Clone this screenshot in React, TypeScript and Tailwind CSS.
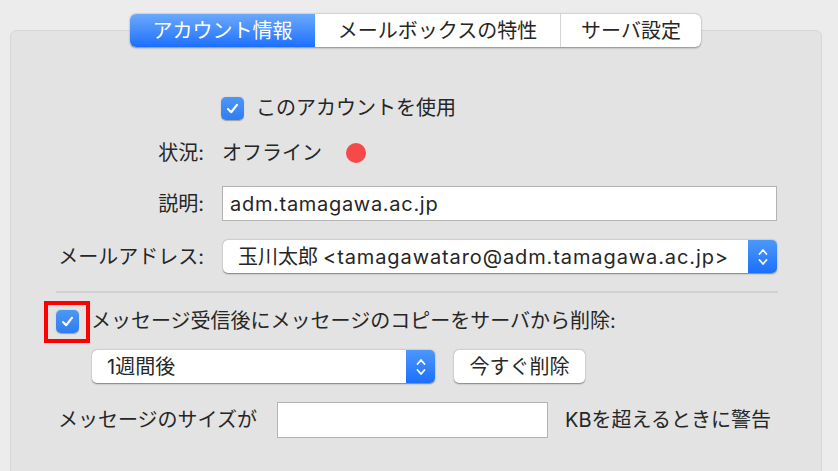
import React from "react";

const font = { fontFamily: 'Inter, "Noto Sans CJK JP", "Noto Sans", sans-serif' };

function Check() {
  return (
    <div className="w-[23px] h-[23px] rounded-[5px] bg-gradient-to-b from-[#4d97f8] to-[#2f7cf2] shadow-[0_0.5px_1px_rgba(0,0,0,0.3)] flex items-center justify-center shrink-0">
      <svg width="15" height="15" viewBox="0 0 16 16" fill="none">
        <path d="M3.2 8.6 L6.6 12 L12.8 4" stroke="white" strokeWidth="2.2" strokeLinecap="round" strokeLinejoin="round" />
      </svg>
    </div>
  );
}

function Stepper() {
  return (
    <div className="w-[29px] self-stretch rounded-r-[5px] bg-gradient-to-b from-[#4c97fa] to-[#1b6ffc] flex items-center justify-center shrink-0">
      <svg width="12" height="22" viewBox="0 0 12 22" fill="none">
        <path d="M2.5 8 L6 4 L9.5 8" stroke="white" strokeWidth="1.8" strokeLinecap="round" strokeLinejoin="round" />
        <path d="M2.5 14 L6 18 L9.5 14" stroke="white" strokeWidth="1.8" strokeLinecap="round" strokeLinejoin="round" />
      </svg>
    </div>
  );
}

function Popup({ children, className }: { children: React.ReactNode; className: string }) {
  return (
    <div className={"flex items-stretch bg-white rounded-[5px] shadow-[0_0.5px_1.5px_rgba(0,0,0,0.45)] " + className}>
      <div className="flex-1 flex items-center pl-[15px] whitespace-nowrap overflow-hidden">{children}</div>
      <Stepper />
    </div>
  );
}

export default function App() {
  return (
    <div className="w-[838px] h-[471px] overflow-hidden bg-[#ececec] pt-[30px] pl-[10px] text-[20px] text-[#262626]" style={font}>
      <div className="relative w-[812px] h-[460px] rounded-[6px] border border-[#d6d6d6] bg-[#e3e3e3]">
        {/* segmented tabs */}
        <div className="absolute -top-[17px] left-[119px] flex h-[33px] rounded-[6px] bg-white shadow-[0_0.5px_2px_rgba(0,0,0,0.4)] overflow-hidden">
          <div className="w-[185px] flex items-center justify-center text-white bg-gradient-to-b from-[#6aa8fb] to-[#1a6ffd]">アカウント情報</div>
          <div className="w-[245px] flex items-center justify-center">メールボックスの特性</div>
          <div className="w-px bg-[#d4d4d4]" />
          <div className="w-[140px] flex items-center justify-center">サーバ設定</div>
        </div>

        <div className="flex flex-col pt-[65px]">
          <div className="h-[24px] flex items-center pl-[210px] gap-[12px]">
            <Check />
            <span>このアカウントを使用</span>
          </div>

          <div className="h-[24px] mt-[21px] flex items-center">
            <div className="w-[193px] text-right">状況:</div>
            <span className="ml-[18px]">オフライン</span>
            <div className="ml-[24px] w-[20px] h-[20px] rounded-full bg-[#f7484a]" />
          </div>

          <div className="h-[35px] mt-[21px] flex items-center">
            <div className="w-[193px] text-right">説明:</div>
            <div className="ml-[18px] w-[555px] h-full bg-white border border-[#b3b3b3] flex items-center pl-[7px] tracking-[0.7px]">adm.tamagawa.ac.jp</div>
          </div>

          <div className="h-[33px] mt-[19px] flex items-center">
            <div className="w-[193px] text-right">メールアドレス:</div>
            <Popup className="ml-[19px] w-[554px] h-full">
              玉川太郎 <span className="ml-[5px] tracking-[0.9px]">&lt;tamagawataro@adm.tamagawa.ac.jp&gt;</span>
            </Popup>
          </div>

          <div className="ml-[45px] w-[722px] h-[2px] mt-[18px] bg-[#d0d0d0]" />

          <div className="h-[24px] mt-[16px] flex items-center pl-[45px]">
            <div className="relative">
              <Check />
              <div className="absolute -left-[12px] -top-[9px] w-[46px] h-[42px] border-[4px] border-[#ff0000]" />
            </div>
            <span className="ml-[12px]">メッセージ受信後にメッセージのコピーをサーバから削除:</span>
          </div>

          <div className="h-[33px] mt-[17px] flex items-center pl-[81px]">
            <Popup className="w-[343px] h-full">1週間後</Popup>
            <div className="ml-[19px] w-[131px] h-full bg-white rounded-[5px] shadow-[0_0.5px_1.5px_rgba(0,0,0,0.45)] flex items-center justify-center">今すぐ削除</div>
          </div>

          <div className="h-[36px] mt-[19px] flex items-center pl-[47px]">
            <span className="w-[219px]">メッセージのサイズが</span>
            <div className="w-[271px] h-full bg-white border border-[#b3b3b3]" />
            <span className="ml-[17px]">KBを超えるときに警告</span>
          </div>
        </div>
      </div>
    </div>
  );
}
